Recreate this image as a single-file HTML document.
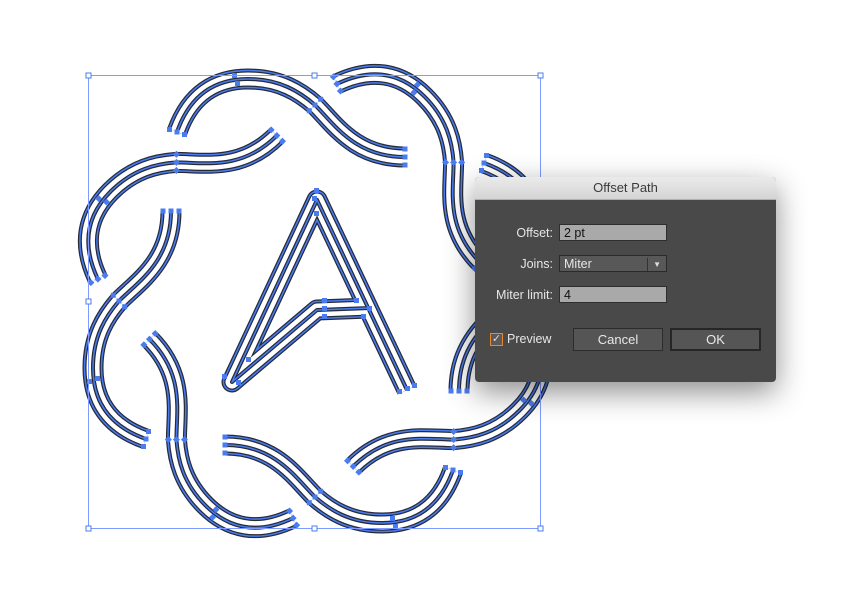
<!DOCTYPE html>
<html><head><meta charset="utf-8"><style>
html,body{margin:0;padding:0;background:#fff;width:848px;height:596px;overflow:hidden;font-family:"Liberation Sans",sans-serif}
.dlg{position:absolute;left:475px;top:177px;width:301px;height:205px;background:#494949;border-radius:4px;box-shadow:0 10px 30px rgba(0,0,0,.45);overflow:hidden}
.tb{height:22px;background:linear-gradient(#ebebeb,#d4d4d4);border-bottom:1px solid #b0b0b0;text-align:center;font-size:13px;line-height:22px;color:#3a3a3a}
.lbl{position:absolute;color:#e6e6e6;font-size:12.5px;text-align:right;width:100px}
.in{position:absolute;left:84px;width:108px;height:17px;background:#a9a9a9;border:1px solid #2e2e2e;font-size:12.5px;line-height:17px;color:#111;padding-left:4px;box-sizing:border-box}
.btn{position:absolute;top:151px;height:23px;background:#555;border:1px solid #2c2c2c;color:#e8e8e8;font-size:13px;text-align:center;line-height:22px;box-sizing:border-box}
</style></head><body>
<svg width="848" height="596" style="position:absolute;left:0;top:0">
<defs>
<path id="sp" d="M177,132 C190,95 215,79 248,79 C280,79 300,92 315,105 C335,125 355,157 405,157"/>
<path id="ap" d="M407,390 L317,200 L232,382 L317,310 L370,308"/>
</defs>
<g fill="none" stroke-linecap="butt">
<g id="layers">
<use href="#sp" stroke="#262b38" stroke-width="21"/>
<use href="#sp" stroke="#4a7cf0" stroke-width="18.5"/>
<use href="#sp" stroke="#262b38" stroke-width="15.5"/>
<use href="#sp" stroke="#fff" stroke-width="13"/>
<use href="#sp" stroke="#262b38" stroke-width="4"/>
<use href="#sp" stroke="#4a7cf0" stroke-width="1.5"/>
<g fill="#4a7cf0" stroke="none">
<rect x="167" y="127" width="5" height="5"/><rect x="174.5" y="129.5" width="5" height="5"/><rect x="182" y="132" width="5" height="5"/>
<rect x="402.5" y="146.5" width="5" height="5"/><rect x="402.5" y="154.5" width="5" height="5"/><rect x="402.5" y="162.5" width="5" height="5"/>
<rect x="306.8" y="108.2" width="5" height="5"/><rect x="312.5" y="102.5" width="5" height="5"/><rect x="318.2" y="96.8" width="5" height="5"/>
<rect x="232" y="73" width="5" height="5"/><rect x="235" y="81" width="5" height="5"/>
</g>
</g>
<use href="#layers" transform="rotate(45 315 301)"/>
<use href="#layers" transform="rotate(90 315 301)"/>
<use href="#layers" transform="rotate(135 315 301)"/>
<use href="#layers" transform="rotate(180 315 301)"/>
<use href="#layers" transform="rotate(225 315 301)"/>
<use href="#layers" transform="rotate(270 315 301)"/>
<use href="#layers" transform="rotate(315 315 301)"/>
</g>
<g fill="none" stroke-linejoin="round">
<use href="#ap" stroke="#262b38" stroke-width="21"/>
<use href="#ap" stroke="#4a7cf0" stroke-width="18.5"/>
<use href="#ap" stroke="#262b38" stroke-width="15.5"/>
<use href="#ap" stroke="#fff" stroke-width="13"/>
<use href="#ap" stroke="#262b38" stroke-width="4"/>
<use href="#ap" stroke="#4a7cf0" stroke-width="1.5"/>
</g>
<g fill="#4a7cf0">
<rect x="314" y="188" width="5" height="5"/><rect x="312" y="196" width="5" height="5"/><rect x="314" y="211" width="5" height="5"/>
<rect x="222" y="374" width="5" height="5"/><rect x="236" y="380" width="5" height="5"/><rect x="246" y="357" width="5" height="5"/>
<rect x="322" y="298" width="5" height="5"/><rect x="322" y="306" width="5" height="5"/><rect x="322" y="314" width="5" height="5"/>
<rect x="354" y="298" width="5" height="5"/><rect x="367" y="306" width="5" height="5"/><rect x="361" y="314" width="5" height="5"/>
<rect x="397" y="389" width="5" height="5"/><rect x="405" y="386" width="5" height="5"/><rect x="412" y="383" width="5" height="5"/>
</g>
<rect x="88.5" y="75.5" width="452" height="453" fill="none" stroke="#7f9bff" stroke-width="1"/>
<g fill="#fff" stroke="#4a7cf0" stroke-width="1">
<rect x="86" y="73" width="5" height="5"/><rect x="312" y="73" width="5" height="5"/><rect x="538" y="73" width="5" height="5"/>
<rect x="86" y="299" width="5" height="5"/><rect x="538" y="299" width="5" height="5"/>
<rect x="86" y="526" width="5" height="5"/><rect x="312" y="526" width="5" height="5"/><rect x="538" y="526" width="5" height="5"/>
</g>
</svg>
<div class="dlg">
<div class="tb">Offset Path</div>
<div class="lbl" style="left:-22px;top:49px">Offset:</div>
<div class="in" style="top:47px">2 pt</div>
<div class="lbl" style="left:-22px;top:80px">Joins:</div>
<div class="in" style="top:78px;background:#585858;color:#e6e6e6;border-color:#2a2a2a">Miter<span style="position:absolute;right:18px;top:2px;width:1px;height:13px;background:#333"></span><span style="position:absolute;right:5px;top:0;font-size:8px;color:#ddd">▼</span></div>
<div class="lbl" style="left:-22px;top:111px">Miter limit:</div>
<div class="in" style="top:109px">4</div>
<div style="position:absolute;left:15px;top:156px;width:11px;height:11px;border:1px solid #e8862a;background:#5a5a5a;color:#ddd;font-size:11px;line-height:11px;text-align:center">✓</div>
<div style="position:absolute;left:32px;top:155px;color:#e6e6e6;font-size:12.5px">Preview</div>
<div class="btn" style="left:98px;width:90px">Cancel</div>
<div class="btn" style="left:195px;width:91px;border:2px solid #262626;line-height:20px">OK</div>
</div>
</body></html>
